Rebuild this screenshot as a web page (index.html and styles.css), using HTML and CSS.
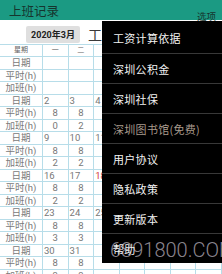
FILE: index.html
```html
<!DOCTYPE html>
<html>
<head>
<meta charset="utf-8">
<link rel="stylesheet" href="styles.css">
</head>
<body>
<div class="appbar">
  <span class="title">上班记录</span>
  <span class="opts">选项</span>
</div>
<div class="toolbar">
  <div class="month">2020年3月</div>
  <div class="heading">工资统计</div>
</div>
<div class="grid">
  <div class="c h">星期</div><div class="c h">一</div><div class="c h">二</div><div class="c h">三</div><div class="c h">四</div><div class="c h">五</div><div class="c h">六</div><div class="c h">日</div>

  <div class="c lbl">日期</div><div class="c d"></div><div class="c d"></div><div class="c d"></div><div class="c d"></div><div class="c d"></div><div class="c d"></div><div class="c d">1</div>
  <div class="c lbl">平时(h)</div><div class="c"></div><div class="c"></div><div class="c"></div><div class="c"></div><div class="c"></div><div class="c"></div><div class="c"></div>
  <div class="c lbl">加班(h)</div><div class="c"></div><div class="c"></div><div class="c"></div><div class="c"></div><div class="c"></div><div class="c"></div><div class="c"></div>

  <div class="c lbl">日期</div><div class="c d">2</div><div class="c d">3</div><div class="c d">4</div><div class="c d">5</div><div class="c d">6</div><div class="c d">7</div><div class="c d">8</div>
  <div class="c lbl">平时(h)</div><div class="c">8</div><div class="c">8</div><div class="c">8</div><div class="c">8</div><div class="c">8</div><div class="c"></div><div class="c"></div>
  <div class="c lbl">加班(h)</div><div class="c">0</div><div class="c">2</div><div class="c">2</div><div class="c">2</div><div class="c">2</div><div class="c"></div><div class="c"></div>

  <div class="c lbl">日期</div><div class="c d">9</div><div class="c d">10</div><div class="c d">11</div><div class="c d">12</div><div class="c d">13</div><div class="c d">14</div><div class="c d">15</div>
  <div class="c lbl">平时(h)</div><div class="c">8</div><div class="c">8</div><div class="c">8</div><div class="c">8</div><div class="c">8</div><div class="c"></div><div class="c"></div>
  <div class="c lbl">加班(h)</div><div class="c">2</div><div class="c">2</div><div class="c">2</div><div class="c">2</div><div class="c">2</div><div class="c"></div><div class="c"></div>

  <div class="c lbl">日期</div><div class="c d">16</div><div class="c d">17</div><div class="c d red">18</div><div class="c d">19</div><div class="c d">20</div><div class="c d">21</div><div class="c d">22</div>
  <div class="c lbl">平时(h)</div><div class="c">8</div><div class="c">8</div><div class="c">8</div><div class="c">8</div><div class="c">8</div><div class="c"></div><div class="c"></div>
  <div class="c lbl">加班(h)</div><div class="c">2</div><div class="c">2</div><div class="c">2</div><div class="c">2</div><div class="c">2</div><div class="c"></div><div class="c"></div>

  <div class="c lbl">日期</div><div class="c d">23</div><div class="c d">24</div><div class="c d">25</div><div class="c d">26</div><div class="c d">27</div><div class="c d">28</div><div class="c d">29</div>
  <div class="c lbl">平时(h)</div><div class="c">8</div><div class="c">8</div><div class="c">8</div><div class="c">8</div><div class="c">8</div><div class="c"></div><div class="c"></div>
  <div class="c lbl">加班(h)</div><div class="c">3</div><div class="c">3</div><div class="c">3</div><div class="c">3</div><div class="c">3</div><div class="c"></div><div class="c"></div>

  <div class="c lbl">日期</div><div class="c d">30</div><div class="c d">31</div><div class="c d"></div><div class="c d"></div><div class="c d"></div><div class="c d"></div><div class="c d"></div>
  <div class="c lbl">平时(h)</div><div class="c">8</div><div class="c">8</div><div class="c"></div><div class="c"></div><div class="c"></div><div class="c"></div><div class="c"></div>
  <div class="c lbl">加班(h)</div><div class="c">3</div><div class="c">3</div><div class="c"></div><div class="c"></div><div class="c"></div><div class="c"></div><div class="c"></div>
</div>

<div class="menu">
  <div class="item">工资计算依据</div>
  <div class="item">深圳公积金</div>
  <div class="item">深圳社保</div>
  <div class="item muted">深圳图书馆(免费)</div>
  <div class="item">用户协议</div>
  <div class="item">隐私政策</div>
  <div class="item">更新版本</div>
  <div class="item">帮助</div>
</div>
<div class="watermark">6891800.COM</div>
</body>
</html>
```

FILE: styles.css
```css
html, body {
  margin: 0;
  padding: 0;
}
body {
  width: 222px;
  height: 274px;
  overflow: hidden;
  position: relative;
  background: #ffffff;
  font-family: "Noto Sans CJK SC", "Noto Sans", sans-serif;
}
.appbar {
  height: 20px;
  background: #1b9a83;
  display: flex;
  justify-content: space-between;
  align-items: flex-start;
  padding: 0 6px 0 9px;
}
.title {
  font-size: 12.5px;
  line-height: 22px;
  color: #16352e;
}
.opts {
  font-size: 9.5px;
  line-height: 12px;
  margin-top: 10px;
  color: #16352e;
}
.toolbar {
  height: 24px;
  box-sizing: border-box;
  padding: 6px 0 0 26px;
  display: flex;
  align-items: flex-start;
  overflow: hidden;
}
.month {
  width: 54px;
  height: 17px;
  flex: none;
  background: #dfdfdf;
  border-radius: 2px;
  display: flex;
  align-items: center;
  justify-content: center;
  font-family: "Roboto", "Noto Sans CJK SC", sans-serif;
  font-size: 9px;
  font-weight: bold;
  color: #222;
}
.heading {
  margin-left: 8px;
  font-size: 14px;
  line-height: 17px;
  color: #3a3a3a;
  white-space: nowrap;
}
.grid {
  display: grid;
  grid-template-columns: 43px repeat(7, 1fr);
  grid-template-rows: 12px;
  grid-auto-rows: 12.5px;
  width: 222px;
  box-sizing: border-box;
  border-top: 1px solid #b7dde9;
}
.c {
  box-sizing: border-box;
  border-right: 1px solid #b7dde9;
  border-bottom: 1px solid #b7dde9;
  display: flex;
  align-items: center;
  justify-content: center;
  overflow: hidden;
  white-space: nowrap;
  font-family: "Roboto", "Noto Sans CJK SC", sans-serif;
  font-size: 9.5px;
  line-height: 11px;
  color: #777;
}
.c.h {
  font-size: 7px;
  color: #666;
}
.c.d {
  justify-content: flex-start;
  padding-left: 1px;
}
.c.lbl {
  color: #7a7a7a;
}
.c.red {
  color: #d23a3a;
}
.menu {
  position: absolute;
  left: 102px;
  top: 21px;
  width: 120px;
  padding-top: 2px;
  background: #000;
  z-index: 2;
}
.item {
  height: 30px;
  box-sizing: border-box;
  padding-left: 11px;
  display: flex;
  align-items: center;
  font-size: 11px;
  letter-spacing: 0.3px;
  color: #f2f2f2;
}
.item + .item {
  border-top: 1px solid #383838;
}
.item.muted {
  color: #a89a8c;
}
.watermark {
  position: absolute;
  left: 110px;
  top: 238px;
  width: 112px;
  overflow: hidden;
  z-index: 3;
  font-family: "Roboto", sans-serif;
  font-weight: 300;
  font-size: 20px;
  line-height: 24px;
  color: rgba(225, 220, 230, 0.62);
  white-space: nowrap;
}
```
